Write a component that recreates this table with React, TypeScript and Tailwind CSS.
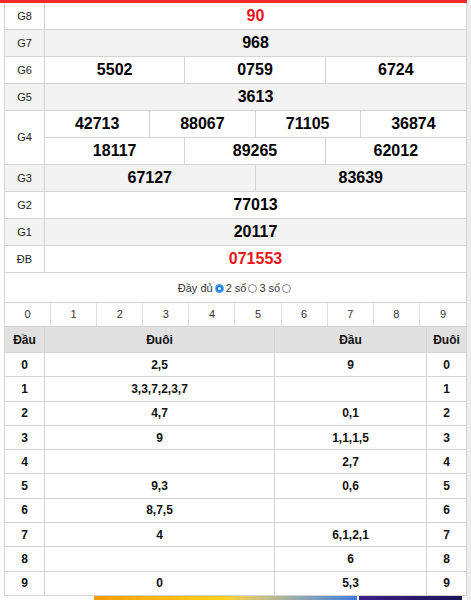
const prizes: { label: string; rows: string[][]; red?: boolean }[] = [
  { label: "G8", rows: [["90"]], red: true },
  { label: "G7", rows: [["968"]] },
  { label: "G6", rows: [["5502", "0759", "6724"]] },
  { label: "G5", rows: [["3613"]] },
  { label: "G4", rows: [["42713", "88067", "71105", "36874"], ["18117", "89265", "62012"]] },
  { label: "G3", rows: [["67127", "83639"]] },
  { label: "G2", rows: [["77013"]] },
  { label: "G1", rows: [["20117"]] },
  { label: "ĐB", rows: [["071553"]], red: true },
];

const loto: [string, string, string][] = [
  ["2,5", "9", "0"],
  ["3,3,7,2,3,7", "", "1"],
  ["4,7", "0,1", "2"],
  ["9", "1,1,1,5", "3"],
  ["", "2,7", "4"],
  ["9,3", "0,6", "5"],
  ["8,7,5", "", "6"],
  ["4", "6,1,2,1", "7"],
  ["", "6", "8"],
  ["0", "5,3", "9"],
];

const cols: Record<number, string> = {
  1: "grid-cols-1",
  2: "grid-cols-2",
  3: "grid-cols-3",
  4: "grid-cols-4",
};

const Radio = ({ on }: { on?: boolean }) =>
  on ? (
    <span className="inline-flex w-[9px] h-[9px] rounded-full bg-[#1a7fe8] border border-[#5aa6f0] items-center justify-center mx-[2px]">
      <span className="w-[3px] h-[3px] rounded-full bg-white" />
    </span>
  ) : (
    <span className="inline-block w-[9px] h-[9px] rounded-full border border-[#8a8a8a] bg-white mx-[2px]" />
  );

const App = () => {
  return (
    <div className="flex w-[471px] h-[600px] overflow-hidden bg-white font-['Liberation_Sans',Arial,sans-serif] text-[#111]">
      <div className="w-[467px]">
        <div className="h-[3px] bg-[#f0282d]" />
        <div className="pl-[4px]">
          <div className="border-x border-[#d4d4d4]">
            {prizes.map((p, i) => (
              <div
                key={p.label}
                className={`flex border-b border-[#d4d4d4] ${i % 2 === 1 ? "bg-[#f3f3f3]" : "bg-white"}`}
              >
                <div className="w-[40px] border-r border-[#d4d4d4] flex items-center justify-center text-[11px] text-[#222]">
                  {p.label}
                </div>
                <div className="flex-1">
                  {p.rows.map((r, j) => (
                    <div
                      key={j}
                      className={`grid ${cols[r.length]} ${j > 0 ? "h-[27px] border-t border-[#d4d4d4]" : "h-[26px]"}`}
                    >
                      {r.map((n, k) => (
                        <div
                          key={k}
                          className={`flex items-center justify-center text-[16px] font-bold ${p.red ? "text-[#e8141c]" : "text-black"} ${k < r.length - 1 ? "border-r border-[#d4d4d4]" : ""}`}
                        >
                          {n}
                        </div>
                      ))}
                    </div>
                  ))}
                </div>
              </div>
            ))}

            <div className="h-[29px] flex items-center justify-center text-[11px] text-[#333] pt-[2px]">
              <span>Đầy đủ</span>
              <Radio on />
              <span>2 số</span>
              <Radio />
              <span>3 số</span>
              <Radio />
            </div>

            <div className="grid grid-cols-10 h-[24px] border-t border-[#d4d4d4] bg-white">
              {Array.from({ length: 10 }, (_, d) => (
                <div
                  key={d}
                  className={`flex items-center justify-center text-[11px] text-[#333] ${d < 9 ? "border-r border-[#e0e0e0]" : ""}`}
                >
                  {d}
                </div>
              ))}
            </div>

            <div className="flex h-[26px] bg-[#e0e0e0] text-[12px] font-bold border-t border-[#d4d4d4]">
              <div className="w-[40px] border-r border-[#d4d4d4] flex items-center justify-center">Đầu</div>
              <div className="w-[230px] border-r border-[#d4d4d4] flex items-center justify-center">Đuôi</div>
              <div className="w-[152px] border-r border-[#d4d4d4] flex items-center justify-center">Đầu</div>
              <div className="flex-1 flex items-center justify-center">Đuôi</div>
            </div>

            {loto.map((r, d) => (
              <div key={d} className="flex h-[24.3px] border-t border-[#d4d4d4] text-[12px] font-bold bg-white">
                <div className="w-[40px] border-r border-[#d4d4d4] flex items-center justify-center">{d}</div>
                <div className="w-[230px] border-r border-[#d4d4d4] flex items-center justify-center">{r[0]}</div>
                <div className="w-[152px] border-r border-[#d4d4d4] flex items-center justify-center">{r[1]}</div>
                <div className="flex-1 flex items-center justify-center">{r[2]}</div>
              </div>
            ))}
            <div className="border-t border-[#d4d4d4]" />
          </div>
        </div>
        <div className="flex h-[6px]">
          <div className="w-[94px]" />
          <div className="w-[263px] bg-gradient-to-r from-[#f59a0c] via-[#ffd21a] to-[#3d7be0]" />
          <div className="w-[2px]" />
          <div className="w-[103px] bg-gradient-to-r from-[#3a1f8a] to-[#1b1455]" />
        </div>
      </div>
      <div className="flex-1 bg-[#ececec]" />
    </div>
  );
};

export default App;
